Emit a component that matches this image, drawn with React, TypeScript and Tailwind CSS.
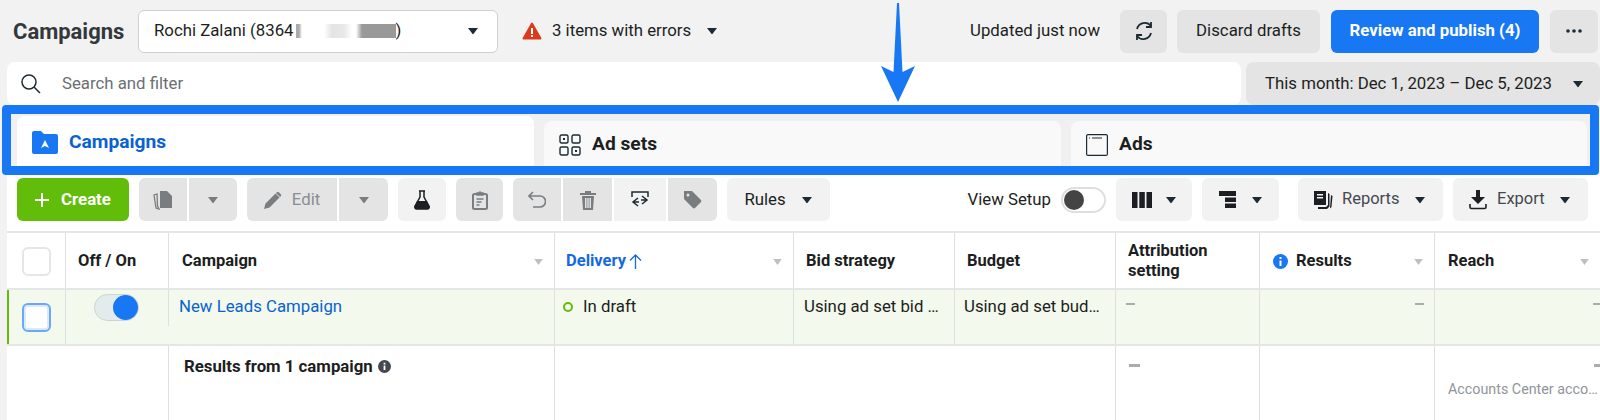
import { ReactNode } from "react";

const Caret = ({ className = "fill-[#1c2b33]" }: { className?: string }) => (
  <svg width="12" height="8" viewBox="0 0 12 8" className={className}>
    <path d="M1 1h10L6.6 6.8a.8.8 0 0 1-1.2 0z" />
  </svg>
);

const SortCaret = () => (
  <svg width="9" height="6" viewBox="0 0 10 7" className="fill-[#bcc0c4]">
    <path d="M0 0h10L5 7z" />
  </svg>
);

const FolderIcon = () => (
  <svg width="26" height="23" viewBox="0 0 26 23">
    <path
      d="M0 2a2 2 0 0 1 2-2h7l3 3h12a2 2 0 0 1 2 2v16a2 2 0 0 1-2 2H2a2 2 0 0 1-2-2z"
      fill="#1877f2"
    />
    <path d="M13 9l4 8-4-2-4 2z" fill="#fff" />
  </svg>
);

const AdSetsIcon = () => (
  <svg width="22" height="22" viewBox="0 0 22 22" fill="none" stroke="#1c2b33" strokeWidth="1.4">
    <rect x="1" y="1" width="8" height="8" rx="1.5" />
    <rect x="13" y="1" width="8" height="8" rx="1.5" />
    <rect x="1" y="13" width="8" height="8" rx="1.5" />
    <rect x="13" y="13" width="8" height="8" rx="1.5" />
    <rect x="4" y="4" width="2" height="2" fill="#1c2b33" stroke="none" />
    <rect x="16" y="16" width="2" height="2" fill="#1c2b33" stroke="none" />
  </svg>
);

const AdsIcon = () => (
  <svg width="22" height="22" viewBox="0 0 22 22" fill="none" stroke="#1c2b33" strokeWidth="1.2">
    <rect x="0.6" y="0.6" width="20.8" height="20.8" rx="1.5" />
    <path d="M3 4h1M6 4h10" />
  </svg>
);

const ToolButton = ({
  children,
  className = "",
}: {
  children: ReactNode;
  className?: string;
}) => (
  <div className={`flex h-[43px] items-center justify-center rounded-md ${className}`}>
    {children}
  </div>
);

const Th = ({
  children,
  className = "",
  sort = false,
}: {
  children: ReactNode;
  className?: string;
  sort?: boolean;
}) => (
  <div className={`relative flex items-center border-r border-[#dddfe2] pl-3 pt-[1px] text-[16.5px] font-bold ${className}`}>
    {children}
    {sort && (
      <span className="absolute right-[11px] top-[26px] flex">
        <SortCaret />
      </span>
    )}
  </div>
);

const Dash = ({ className = "" }: { className?: string }) => (
  <span className={`block h-[2px] w-[9px] bg-[#a8adb2] ${className}`} />
);

const cols = "grid grid-cols-[59px_103px_386px_239px_161px_161px_144px_175px_165px]";

export default function App() {
  return (
    <div
      className="relative h-[420px] w-[1600px] overflow-hidden bg-[#f2f2f2] text-[#1c1e21]"
      style={{ fontFamily: "Roboto, sans-serif" }}
    >
      {/* annotation arrow */}
      <svg width="36" height="100" viewBox="0 0 36 100" className="absolute left-[880px] top-[3px] z-10">
        <path d="M17 0h2l3.5 69L35 63 18 99 1 63l12.500 6z" fill="#1877f2" />
      </svg>

      {/* top bar */}
      <div className="mt-[10px] flex h-[42px] items-center pl-[13px] pr-[2px] text-[16.8px]">
        <div className="w-[125px] text-[22px] font-bold text-[#33383d]">Campaigns</div>
        <div className="flex h-[43px] w-[360px] items-center justify-between rounded-md border border-[#ced0d4] bg-white pl-[15px] pr-[18px]">
          <div className="flex items-center">
            Rochi Zalani (8364
            <span className="ml-[2px] h-[14px] w-[100px] bg-[linear-gradient(90deg,#aaa_0,#aaa_3%,#fff_6%,#fff_28%,#e4e4e4_36%,#e8e8e8_48%,#fff_56%,#fff_60%,#999_66%,#999_100%)]" />
            )
          </div>
          <Caret />
        </div>
        <svg width="20" height="18" viewBox="0 0 20 18" className="ml-[24px]">
          <path d="M10 1.500l8.500 15h-17z" fill="#dc3a1c" stroke="#dc3a1c" strokeWidth="2" strokeLinejoin="round" />
          <path d="M9 6h2v6H9zM9 13h2v2H9z" fill="#fff" />
        </svg>
        <span className="ml-[10px]">3 items with errors</span>
        <span className="ml-[15px] flex">
          <Caret />
        </span>
        <span className="ml-auto">Updated just now</span>
        <ToolButton className="ml-[20px] w-[47px] bg-[#e4e4e4]">
          <svg width="22" height="22" viewBox="0 0 22 22" fill="none" stroke="#1c2b33" strokeWidth="1.8">
            <path d="M18 6a8 8 0 0 0-14 3M4 16a8 8 0 0 0 14-3" />
            <path d="M18 2v5h-5M4 20v-5h5" />
          </svg>
        </ToolButton>
        <ToolButton className="ml-[10px] w-[143px] bg-[#e4e4e4]">Discard drafts</ToolButton>
        <ToolButton className="ml-[11px] w-[208px] bg-[#1877f2] font-bold text-white">
          Review and publish (4)
        </ToolButton>
        <ToolButton className="ml-[11px] w-[48px] bg-[#e4e4e4]">
          <svg width="16" height="4" viewBox="0 0 16 4" className="fill-[#1c2b33]">
            <circle cx="2" cy="2" r="1.8" />
            <circle cx="8" cy="2" r="1.8" />
            <circle cx="14" cy="2" r="1.8" />
          </svg>
        </ToolButton>
      </div>

      {/* search row */}
      <div className="mt-[10px] flex h-[43px] pl-[7px] text-[16.8px]">
        <div className="flex w-[1234px] items-center rounded-lg bg-white pl-[13px]">
          <svg width="22" height="22" viewBox="0 0 22 22" fill="none" stroke="#1c2b33" strokeWidth="1.5">
            <circle cx="9" cy="9" r="7" />
            <path d="M14 14l6 6" />
          </svg>
          <span className="ml-[20px] text-[#6b6f73]">Search and filter</span>
        </div>
        <div className="ml-[5px] flex flex-1 items-center rounded-lg bg-[#e4e4e4] pl-[19px] pr-[16px]">
          This month: Dec 1, 2023 – Dec 5, 2023
          <span className="ml-auto flex">
            <Caret />
          </span>
        </div>
      </div>

      {/* tab strip, with its blue annotation frame */}
      <div className="relative z-[1] ml-[2px] flex h-[70px] w-[1597px] rounded-[4px] border-[9px] border-[#1877f2] bg-[#f0f0f0] text-[19.2px] font-bold">
        <div className="ml-[6px] mt-[2px] flex h-[50px] w-[517px] items-center gap-[11px] rounded-t-lg bg-white pl-[15px] pt-[2px] text-[#0a62d0]">
          <FolderIcon />
          Campaigns
        </div>
        <div className="ml-[10px] mt-[7px] flex h-[45px] w-[517px] items-center gap-[11px] rounded-t-lg bg-[#f9f9f9] pl-[15px] pt-[2px]">
          <AdSetsIcon />
          Ad sets
        </div>
        <div className="ml-[10px] mr-[3px] mt-[7px] flex h-[45px] flex-1 items-center gap-[11px] rounded-t-lg bg-[#f9f9f9] pl-[15px] pt-[2px]">
          <AdsIcon />
          Ads
        </div>
      </div>

      {/* main panel */}
      <div className="ml-[7px] h-[245px] bg-white">
        <div className="flex h-[56px] items-start gap-[10px] pl-[10px] pr-[12px] pt-[3px] text-[16.8px]">
          <ToolButton className="w-[112px] gap-[12px] bg-[#61bd09] font-bold text-white">
            <svg width="14" height="14" viewBox="0 0 14 14" fill="#fff">
              <path d="M6 0h2v6h6v2H8v6H6V8H0V6h6z" />
            </svg>
            Create
          </ToolButton>
          <div className="flex gap-[2px]">
            <ToolButton className="w-[48px] rounded-r-none bg-[#e4e4e4]">
              <svg width="20" height="20" viewBox="0 0 20 20" fill="#7a7d80">
                <path d="M7 1h7l5 5v12H7z" />
                <path d="M4 4L1 5l2 13 3 1-1.500-3z" fill="none" stroke="#7a7d80" strokeWidth="1.3" />
              </svg>
            </ToolButton>
            <ToolButton className="w-[48px] rounded-l-none bg-[#e4e4e4]">
              <Caret className="fill-[#7a7d80]" />
            </ToolButton>
          </div>
          <div className="flex gap-[2px]">
            <ToolButton className="w-[90px] gap-[10px] rounded-r-none bg-[#e4e4e4] text-[#8a8d91]">
              <svg width="18" height="18" viewBox="0 0 18 18" fill="#7a7d80">
                <path d="M0 18l1.500-5.500L11.500 2.500l4 4-10 10zM12.800 1.200a1.500 1.500 0 0 1 2 0l2 2a1.500 1.500 0 0 1 0 2l-.8.8-4-4z" />
              </svg>
              Edit
            </ToolButton>
            <ToolButton className="w-[49px] rounded-l-none bg-[#e4e4e4]">
              <Caret className="fill-[#7a7d80]" />
            </ToolButton>
          </div>
          <ToolButton className="w-[48px] bg-[#f2f2f2]">
            <svg width="18" height="20" viewBox="0 0 18 20">
              <path d="M6 1h6M7 1v6L2 16a2 2 0 0 0 2 3h10a2 2 0 0 0 2-3l-5-9V1" fill="none" stroke="#1c1e21" strokeWidth="1.5" />
              <path d="M4 11h10l2 5a2 2 0 0 1-2 3H4a2 2 0 0 1-2-3z" fill="#1c1e21" />
            </svg>
          </ToolButton>
          <ToolButton className="w-[47px] bg-[#e4e4e4]">
            <svg width="16" height="20" viewBox="0 0 16 20" fill="none" stroke="#7a7d80" strokeWidth="2">
              <rect x="1" y="4" width="14" height="15" rx="1.5" />
              <path d="M5 4V3h2a1 1 0 0 1 2 0h2v2H5zM4.500 9h7M4.500 12h5M4.500 15h3" strokeWidth="1.4" />
            </svg>
          </ToolButton>
          <div className="flex gap-[2px]">
            <ToolButton className="w-[48px] rounded-r-none bg-[#e4e4e4]">
              <svg width="18" height="17" viewBox="0 0 18 17" fill="none" stroke="#7a7d80" strokeWidth="1.6">
                <path d="M5 1L1 5l4 4M1 5h11a4.500 4.500 0 0 1 0 11H5" />
              </svg>
            </ToolButton>
            <ToolButton className="w-[49px] rounded-none bg-[#e4e4e4]">
              <svg width="16" height="20" viewBox="0 0 16 20" fill="#7a7d80">
                <path d="M0 3h16v2H0zM5 1h6v2H5zM2 6h12l-1 14H3zM5 8v10h1.500V8zM7.300 8v10h1.400V8zM9.500 8v10H11V8z" fillRule="evenodd" />
              </svg>
            </ToolButton>
            <ToolButton className="w-[52px] rounded-none bg-[#f2f2f2]">
              <svg width="20" height="20" viewBox="0 0 20 20" fill="none" stroke="#1c2b33" strokeWidth="1.5">
                <path d="M2 7V2h16v5M8 8l-5 4 5 4M3 12h6M12 6l5 4-5 4M17 10h-6" />
              </svg>
            </ToolButton>
            <ToolButton className="w-[49px] rounded-l-none bg-[#e4e4e4]">
              <svg width="19" height="19" viewBox="0 0 19 19" fill="#7a7d80">
                <path d="M1 1h8l9 9a1.500 1.500 0 0 1 0 2l-6 6a1.500 1.500 0 0 1-2 0L1 9zM5 3.500a1.500 1.500 0 1 0 0 3 1.500 1.500 0 0 0 0-3z" fillRule="evenodd" />
              </svg>
            </ToolButton>
          </div>
          <ToolButton className="w-[103px] gap-[15px] bg-[#f2f2f2]">
            Rules
            <Caret />
          </ToolButton>
          <div className="ml-auto flex h-[43px] items-center gap-[10px]">
            View Setup
            <span className="flex h-[26px] w-[45px] items-center rounded-full border-2 border-[#dddfe2] bg-white pl-[1px]">
              <span className="h-[20px] w-[20px] rounded-full bg-[#444444]" />
            </span>
          </div>
          <ToolButton className="w-[76px] gap-[13px] bg-[#f2f2f2]">
            <svg width="20" height="16" viewBox="0 0 20 16" fill="#1c1e21">
              <rect x="0" y="0" width="5.500" height="16" />
              <rect x="7.300" y="0" width="5.500" height="16" />
              <rect x="14.500" y="0" width="5.500" height="16" />
            </svg>
            <Caret />
          </ToolButton>
          <ToolButton className="w-[77px] gap-[15px] bg-[#f2f2f2]">
            <svg width="17" height="17" viewBox="0 0 17 17" fill="#1c1e21">
              <rect x="0" y="0" width="17" height="5" />
              <rect x="6" y="6.500" width="11" height="4.500" />
              <rect x="6" y="12.500" width="11" height="4.500" />
            </svg>
            <Caret />
          </ToolButton>
          <ToolButton className="ml-[9px] w-[145px] justify-start bg-[#f2f2f2] pl-[15px] text-[16.5px] text-[#444950]">
            <svg width="20" height="20" viewBox="0 0 20 20" fill="#1c1e21">
              <path d="M1 1h12v14H1zM4 4v1.500h6V4zM4 7v1.500h6V7z" fillRule="evenodd" />
              <path d="M15 3l1.500 1v12.500L14 19H5v-2h8l2-2zM18 5l1.500 1-1 11-1.500 1.500z" />
            </svg>
            <span className="ml-[9px]">Reports</span>
            <span className="ml-[14px] flex">
              <Caret />
            </span>
          </ToolButton>
          <ToolButton className="w-[135px] justify-start bg-[#f2f2f2] pl-[16px] text-[16.5px] text-[#444950]">
            <svg width="18" height="20" viewBox="0 0 18 20" fill="#1c1e21">
              <path d="M7 0h4v7h5l-7 7-7-7h5z" />
              <path d="M1 14v3a1.500 1.500 0 0 0 1.500 1.500h13A1.500 1.500 0 0 0 17 17v-3" fill="none" stroke="#1c1e21" strokeWidth="1.6" />
            </svg>
            <span className="ml-[10px]">Export</span>
            <span className="ml-[14px] flex">
              <Caret />
            </span>
          </ToolButton>
        </div>

        {/* table header */}
        <div className={`${cols} h-[59px] border-y-2 border-[#e4e6e8]`}>
          <Th className="pl-[15px]">
            <span className="h-[29px] w-[29px] rounded-md border-2 border-[#e4e6e8]" />
          </Th>
          <Th>Off / On</Th>
          <Th sort className="pl-[13px]">Campaign</Th>
          <Th sort className="pl-[11px] text-[#1469e0]">
            Delivery
            <svg width="13" height="15" viewBox="0 0 13 15" fill="none" stroke="#1469e0" strokeWidth="1.3" className="ml-[3px]">
              <path d="M6.500 15V1M1 6.500l5.500-5.500 5.500 5.500" />
            </svg>
          </Th>
          <Th>Bid strategy</Th>
          <Th>Budget</Th>
          <Th className="leading-[20px]">
            Attribution
            <br />
            setting
          </Th>
          <Th sort className="pl-[13px]">
            <svg width="15" height="15" viewBox="0 0 15 15" className="mr-[8px]">
              <circle cx="7.500" cy="7.500" r="7.500" fill="#1877f2" />
              <path d="M6.500 6.500h2v5.500h-2zM6.500 3h2v2h-2z" fill="#fff" />
            </svg>
            Results
          </Th>
          <Th sort className="border-r-0 pl-[13px]">Reach</Th>
        </div>

        {/* draft row */}
        <div className={`${cols} h-[56px] border-b-2 border-[#e4e6e8] bg-[#f3f9ec] text-[16.8px] shadow-[inset_2px_0_0_#61bd09]`}>
          <div className="border-r border-[#dddfe2] pl-[15px] pt-[13px]">
            <span className="block h-[29px] w-[29px] rounded-md border-2 border-[#6aa7f5] bg-white shadow-[inset_0_0_0_2px_#dbe9fc]" />
          </div>
          <div className="relative pl-[28px] pt-[4px]">
            <span className="flex h-[27px] w-[45px] items-center justify-end rounded-full border border-[#c9d5d5] bg-[#e2ecec]">
              <span className="h-[25px] w-[25px] rounded-full bg-[#1877f2]" />
            </span>
            <span className="absolute right-0 top-0 h-[36px] w-px bg-[#dddfe2]" />
          </div>
          <div className="border-r border-[#dddfe2] pl-[10px] pt-[4px] text-[#0a62d0]">New Leads Campaign</div>
          <div className="flex items-start border-r border-[#dddfe2] pl-[8px] pt-[4px]">
            <span className="mt-[8px] h-[10px] w-[10px] rounded-full border-[2.5px] border-[#61bd09]" />
            <span className="ml-[10px]">In draft</span>
          </div>
          <div className="border-r border-[#dddfe2] pl-[10px] pt-[4px]">Using ad set bid …</div>
          <div className="border-r border-[#dddfe2] pl-[9px] pt-[4px]">Using ad set bud…</div>
          <div className="border-r border-[#dddfe2] pl-[10px] pt-[13px]"><Dash /></div>
          <div className="flex justify-end border-r border-[#dddfe2] pr-[10px] pt-[13px]"><Dash /></div>
          <div className="flex justify-end pt-[13px]"><Dash className="mr-[-2px]" /></div>
        </div>

        {/* totals row */}
        <div className={`${cols} h-[74px]`}>
          <div />
          <div className="border-r border-[#dddfe2]" />
          <div className="flex items-start border-r border-[#dddfe2] pl-[15px] pt-[8px] text-[16.8px] font-bold">
            Results from 1 campaign
            <svg width="13" height="13" viewBox="0 0 13 13" className="ml-[5px] mt-[6px]">
              <circle cx="6.500" cy="6.500" r="6.500" fill="#444950" />
              <path d="M5.600 5.500h1.800v4.500H5.600zM5.600 2.800h1.800v1.700H5.600z" fill="#fff" />
            </svg>
          </div>
          <div className="col-span-3 border-r border-[#dddfe2]" />
          <div className="border-r border-[#dddfe2] pl-[13px] pt-[18px]"><Dash className="h-[3px] w-[11px] bg-[#444950]" /></div>
          <div className="border-r border-[#dddfe2]" />
          <div className="flex flex-col items-end pt-[18px]">
            <Dash className="mr-[-3px] h-[3px] bg-[#444950]" />
            <div className="mt-[12px] w-full whitespace-nowrap pl-[13px] text-[14.3px] text-[#90949c]">Accounts Center acco…</div>
          </div>
        </div>
      </div>
    </div>
  );
}
